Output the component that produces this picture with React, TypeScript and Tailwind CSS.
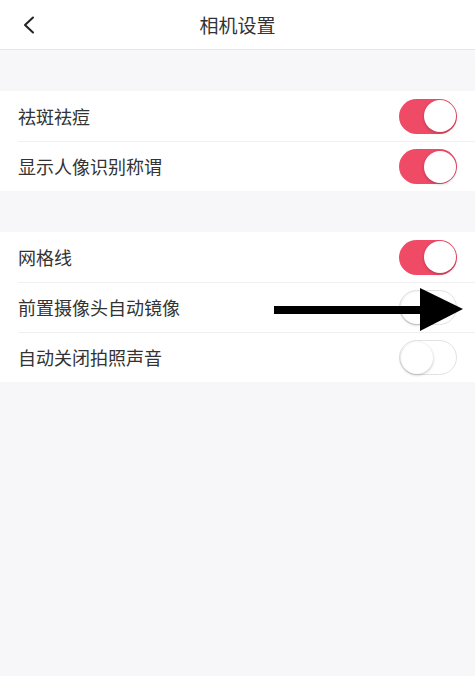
import React, { useState } from 'react';

const font = { fontFamily: '"Noto Sans CJK SC", "Noto Sans", sans-serif' };

const Toggle: React.FC<{ on: boolean; onChange: () => void }> = ({ on, onChange }) => (
  <button
    type="button"
    onClick={onChange}
    className={`flex items-center w-[58px] h-[35px] rounded-full px-[1px] transition-colors ${
      on ? 'bg-[#ef4a66] justify-end' : 'bg-white border border-[#e2e2e2] justify-start'
    }`}
  >
    <span className="w-[32px] h-[32px] rounded-full bg-white shadow-[0_1px_3px_rgba(0,0,0,0.25)]" />
  </button>
);

interface Item {
  key: string;
  label: string;
  on: boolean;
}

export default function App() {
  const [groups, setGroups] = useState<Item[][]>([
    [
      { key: 'beauty', label: '祛斑祛痘', on: true },
      { key: 'title', label: '显示人像识别称谓', on: true },
    ],
    [
      { key: 'grid', label: '网格线', on: true },
      { key: 'mirror', label: '前置摄像头自动镜像', on: false },
      { key: 'mute', label: '自动关闭拍照声音', on: false },
    ],
  ]);

  const flip = (g: number, i: number) => {
    setGroups((prev) =>
      prev.map((grp, gi) =>
        gi !== g ? grp : grp.map((it, ii) => (ii === i ? { ...it, on: !it.on } : it))
      )
    );
  };

  return (
    <div className="w-[475px] h-[676px] bg-[#f7f7f9] overflow-hidden flex flex-col gap-[41px]" style={font}>
      {/* Header */}
      <div className="h-[50px] shrink-0 bg-white border-b border-[#e6e6e8] grid grid-cols-[60px_1fr_60px] items-center">
        <button type="button" className="pl-[22px] flex items-center">
          <svg width="14" height="18" viewBox="0 0 14 18" fill="none">
            <path d="M11 1.5 L3 9 L11 16.5" stroke="#222" strokeWidth="2" strokeLinecap="round" strokeLinejoin="round" />
          </svg>
        </button>
        <h1 className="text-center text-[19px] text-[#333] leading-none">相机设置</h1>
        <span />
      </div>

      {groups.map((grp, g) => (
        <div key={g} className="bg-white flex flex-col pl-[18px]">
          {grp.map((it, i) => (
            <div
              key={it.key}
              className={`relative h-[50px] flex items-center justify-between pr-[18px] ${
                i > 0 ? 'border-t border-[#f0f0f2]' : ''
              }`}
            >
              <span className="text-[18px] text-[#333]">{it.label}</span>
              <Toggle on={it.on} onChange={() => flip(g, i)} />
              {it.key === 'mirror' && (
                <svg className="absolute left-[256px] top-[5px] pointer-events-none" width="190" height="44" viewBox="0 0 190 44">
                  <rect x="0" y="18" width="150" height="8" fill="#000" />
                  <polygon points="146,0 189,21 146,43" fill="#000" />
                </svg>
              )}
            </div>
          ))}
        </div>
      ))}
    </div>
  );
}
